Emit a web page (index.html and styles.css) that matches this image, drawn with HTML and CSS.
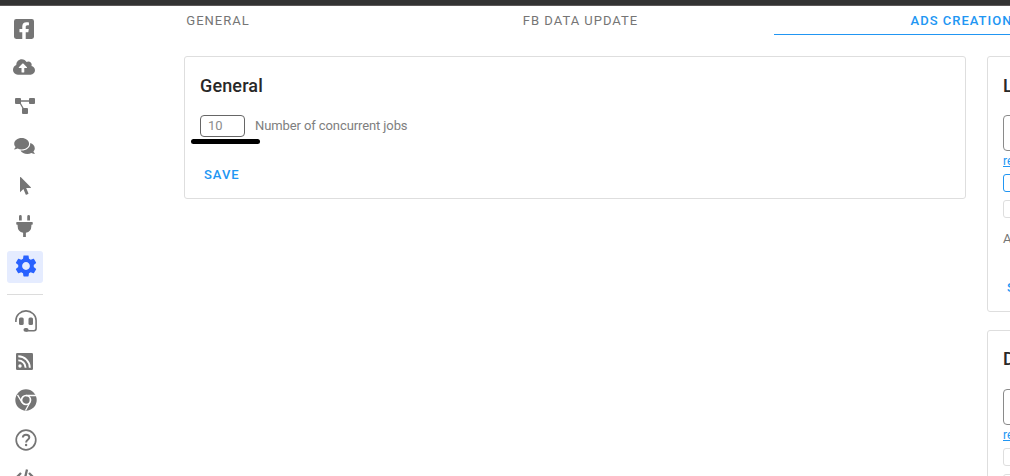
FILE: index.html
```
<!DOCTYPE html>
<html lang="en">
<head>
  <meta charset="utf-8">
  <title>Settings</title>
  <link rel="stylesheet" href="styles.css">
</head>
<body>

  <div class="topbar"></div>

  <div class="app">
    <!-- SIDEBAR -->
    <nav class="sidebar">
      <a class="item"><svg class="i-fb" viewBox="0 32 448 448"><path d="M400 32H48A48 48 0 0 0 0 80v352a48 48 0 0 0 48 48h137.25V327.69h-63V256h63v-54.64c0-62.15 37-96.48 93.67-96.48 27.14 0 55.52 4.84 55.52 4.84v61h-31.27c-30.81 0-40.42 19.12-40.42 38.73V256h68.78l-11 71.69h-57.78V480H400a48 48 0 0 0 48-48V80a48 48 0 0 0-48-48z"/></svg></a>
      <a class="item"><svg class="i-cloud" viewBox="0 32 640 448"><path d="M537.6 226.6c4.1-10.7 6.4-22.4 6.4-34.6 0-53-43-96-96-96-19.7 0-38.1 6-53.3 16.2C367 64.2 315.3 32 256 32c-88.4 0-160 71.6-160 160 0 2.7.1 5.4.2 8.1C40.2 219.8 0 273.2 0 336c0 79.5 64.5 144 144 144h368c70.7 0 128-57.3 128-128 0-61.9-44-113.6-102.4-125.4zM393.4 288H328v112c0 8.8-7.2 16-16 16h-48c-8.8 0-16-7.2-16-16V288h-65.4c-14.3 0-21.4-17.2-11.3-27.3l105.4-105.4c6.2-6.2 16.4-6.2 22.6 0l105.4 105.4c10.1 10.1 2.9 27.3-11.3 27.3z"/></svg></a>
      <a class="item"><svg class="i-flow" viewBox="0 0 20 16"><rect width="6" height="6" rx="1"/><rect x="14" width="6" height="6" rx="1"/><rect x="7" y="10" width="6" height="6" rx="1"/><path d="M5 3h10M4.500 4L8.500 11" stroke="currentColor" stroke-width="1.300"/></svg></a>
      <a class="item"><svg class="i-chat" viewBox="0 32 576 448"><path d="M416 192c0-88.400-93.100-160-208-160S0 103.600 0 192c0 34.300 14.100 65.900 38 92-13.400 30.200-35.500 54.200-35.800 54.500-2.200 2.300-2.800 5.700-1.500 8.700S4.800 352 8 352c36.600 0 66.900-12.300 88.700-25 32.200 15.700 70.300 25 111.300 25 114.900 0 208-71.600 208-160zm122 220c23.900-26 38-57.700 38-92 0-66.900-53.500-124.200-129.300-148.100.9 6.600 1.300 13.300 1.300 20.100 0 105.900-107.700 192-240 192-10.800 0-21.300-.8-31.700-1.900C207.800 439.600 281.800 480 368 480c41 0 79.100-9.200 111.300-25 21.800 12.700 52.100 25 88.700 25 3.200 0 6.100-1.900 7.300-4.800 1.300-2.900.7-6.300-1.500-8.700-.3-.3-22.400-24.200-35.800-54.500z"/></svg></a>
      <a class="item"><svg class="i-cursor" viewBox="0 0 11 18"><path d="M0 .4v14.800l3.400-3.100 2.300 5.300q.2.500.7.300l1.700-.7q.5-.2.300-.7L6.200 11h4.500q.5-.3.100-.8L.7.100Q.2-.2 0 .4z"/></svg></a>
      <a class="item"><svg class="i-plug" viewBox="0 0 384 512"><path d="M320,32a32,32,0,0,0-64,0v96h64Zm48,128H16A16,16,0,0,0,0,176v32a16,16,0,0,0,16,16H32v32A160.070,160.070,0,0,0,160,412.800V512h64V412.800A160.070,160.070,0,0,0,352,256V224h16a16,16,0,0,0,16-16V176A16,16,0,0,0,368,160ZM128,32a32,32,0,0,0-64,0v96h64Z"/></svg></a>
      <a class="item active"><svg class="i-gear" viewBox="0 0 24 24"><path d="M19.140 12.940c.04-.3.060-.61.060-.94 0-.32-.02-.64-.07-.94l2.030-1.580c.18-.14.230-.41.120-.61l-1.920-3.320c-.12-.22-.37-.29-.59-.22l-2.390.96c-.5-.38-1.030-.7-1.620-.94l-.36-2.540c-.04-.24-.24-.41-.48-.41h-3.840c-.24 0-.43.17-.47.41l-.36 2.540c-.59.24-1.130.57-1.620.94l-2.390-.96c-.22-.08-.47 0-.59.22L2.740 8.870c-.12.21-.08.47.12.61l2.030 1.580c-.05.3-.09.63-.09.94s.02.640.07.940l-2.030 1.580c-.18.140-.23.410-.12.610l1.920 3.320c.12.220.37.290.59.220l2.390-.96c.5.380 1.030.700 1.620.940l.36 2.540c.05.240.24.410.48.410h3.840c.24 0 .44-.17.47-.41l.36-2.540c.59-.24 1.130-.56 1.620-.94l2.390.96c.22.080.47 0 .59-.22l1.920-3.320c.12-.22.070-.47-.12-.61l-2.010-1.580zM12 15.600c-1.980 0-3.600-1.620-3.600-3.600s1.620-3.600 3.600-3.600 3.600 1.620 3.600 3.600-1.620 3.600-3.600 3.600z"/></svg></a>

      <div class="divider"></div>

      <a class="item"><svg class="i-head" viewBox="0 0 22 22"><path d="M.9 12v-1.500a10.100 9.600 0 0 1 20.200 0V18.500a2.200 2.200 0 0 1-2.200 2.200H11" fill="none" stroke="currentColor" stroke-width="1.600"/><rect x="4" y="7.500" width="4.700" height="7.500" rx="1.500"/><rect x="13.500" y="7.500" width="4.500" height="7.500" rx="1.500"/><rect x="8.500" y="18" width="5" height="3.800" rx="1.800"/></svg></a>
      <a class="item"><svg class="i-rss" viewBox="0 0 17 17"><rect width="17" height="17" rx="1.300"/><g fill="none" stroke="#fff" stroke-width="1.900"><path d="M2.300 7.400a7.300 7.300 0 0 1 7.300 7.300M2.300 3.200a11.500 11.500 0 0 1 11.500 11.500"/></g><circle cx="4" cy="13" r="1.700" fill="#fff"/></svg></a>
      <a class="item"><svg class="i-chrome" viewBox="0 0 22 22"><circle cx="11" cy="11" r="10.700"/><circle cx="11" cy="11" r="4.500" fill="none" stroke="#fff" stroke-width="1.700"/><path d="M11 6.500h10M7 13.300L2.500 5.800M15 13.300L10.500 21.500" stroke="#fff" stroke-width="1.300"/></svg></a>
      <a class="item"><svg class="i-help" viewBox="0 0 22 22"><g fill="none" stroke="currentColor"><circle cx="11" cy="11" r="9.800" stroke-width="1.700"/><path d="M7.800 8.500C8 6.600 9.200 5.700 11 5.700c2 0 3.300 1 3.300 2.700 0 2.400-3.200 2.300-3.200 5" stroke-width="2"/></g><circle cx="11.100" cy="16" r="1.200"/></svg></a>
      <a class="item"><svg class="i-code" viewBox="0 0 22 18"><path d="M7 4L2 9l5 5M15 4l5 5-5 5M13 .5l-4 17" fill="none" stroke="currentColor" stroke-width="2.300"/></svg></a>
    </nav>

    <main class="content">
      <!-- TABS -->
      <div class="tabs">
        <div class="tab tab-general">General</div>
        <div class="tab tab-fb">FB data update</div>
        <div class="tab tab-ads selected">Ads creation</div>
      </div>

      <!-- CARDS -->
      <div class="columns">
        <section class="card card-general">
          <h2>General</h2>
          <div class="field">
            <div class="number">10</div>
            <label>Number of concurrent jobs</label>
            <span class="marker"></span>
          </div>
          <div class="save">Save</div>
        </section>

        <div class="side">
          <section class="card card-l">
            <h2>L</h2>
            <div class="select"></div>
            <a class="reset">reset</a>
            <div class="box focus"></div>
            <div class="box"></div>
            <div class="note">A</div>
            <div class="save">Save</div>
          </section>
          <section class="card card-d">
            <h2>D</h2>
            <div class="select"></div>
            <a class="reset">reset</a>
            <div class="box"></div>
            <div class="box"></div>
          </section>
        </div>
      </div>
    </main>
  </div>

</body>
</html>
```
FILE: styles.css
```
* { box-sizing: border-box; }
body {
  margin: 0;
  height: 476px;
  overflow: hidden;
  background: #fff;
  color: #757575;
  font-family: Roboto, sans-serif;
  font-size: 13px;
}
.topbar {
  height: 6px;
  background: #333;
  border-bottom: 1px solid #5c5858;
}
.app {
  display: flex;
  height: 470px;
  overflow: hidden;
}

/* sidebar */
.sidebar {
  flex: none;
  width: 49px;
  padding: 5px 6px 0 7px;
}
.item {
  display: flex;
  align-items: center;
  justify-content: center;
  height: 32px;
  margin-bottom: 8px;
  border-radius: 3px;
  color: #757575;
}
.item svg {
  display: block;
  flex: none;
  fill: currentColor;
}
.item.active {
  background: #e5ecff;
  color: #2962ff;
  margin-bottom: 11px;
}
.divider {
  height: 1px;
  margin-bottom: 10px;
  background: #dcdcdc;
}
.i-fb { width: 20px; height: 20px; margin: 3px 2px 0 0; }
.i-cloud { width: 22px; height: 16px; margin: 0 3px 0 0; }
.i-flow { width: 20px; height: 16px; margin: -2px 1px 0 0; }
.i-chat { width: 21px; height: 16px; margin: -2px 1px 0 0; }
.i-cursor { width: 11px; height: 18px; margin-top: -2px; }
.i-plug { width: 17px; height: 22px; margin: -2px 1px 0 0; }
.i-gear { width: 26px; height: 26px; margin: -2px 0 0 1px; }
.i-head { width: 22px; height: 22px; margin-left: 1px; }
.i-rss { width: 17px; height: 17px; margin-right: 2px; }
.i-chrome { width: 22px; height: 22px; margin: -2px 0 0 1px; }
.i-help { width: 22px; height: 22px; margin: -2px 0 0 1px; }
.i-code { width: 22px; height: 18px; margin-top: -6px; }

/* tabs */
.content {
  flex: 1;
  min-width: 0;
}
.tabs {
  display: flex;
  height: 29px;
}
.tab {
  flex: none;
  height: 29px;
  padding-left: 1px;
  line-height: 29px;
  text-align: center;
  text-transform: uppercase;
  font-weight: 400;
  letter-spacing: 1px;
  white-space: nowrap;
}
.tab-general { width: 337px; }
.tab-fb { width: 388px; }
.tab-ads { width: 376px; }
.tab.selected {
  padding-left: 0;
  padding-right: 1px;
  font-weight: 500;
  color: #2196f3;
  border-bottom: 1px solid #2196f3;
}

/* cards */
.columns {
  display: flex;
  align-items: flex-start;
  gap: 21px;
  padding: 21px 0 0 135px;
}
.card {
  border: 1px solid #dedede;
  border-radius: 3px;
  padding: 15px;
}
.card-general {
  flex: none;
  width: 782px;
  height: 143px;
}
.side {
  flex: none;
  width: 782px;
}
.card-l {
  height: 256px;
  margin-bottom: 18px;
}
.card-d { height: 256px; }
h2 {
  margin: 0 0 15px;
  height: 28px;
  line-height: 28px;
  font-size: 18px;
  font-weight: 500;
  letter-spacing: 0.15px;
  color: #282828;
}
.card-d h2 { line-height: 26px; }
.field {
  position: relative;
  display: flex;
  align-items: center;
  gap: 10px;
  height: 22px;
}
.field label {
  line-height: 20px;
  letter-spacing: -0.1px;
  color: #7e7e7e;
}
.number {
  width: 45px;
  height: 22px;
  padding-left: 7px;
  line-height: 20px;
  border: 1px solid #666;
  border-radius: 4px;
  color: #8c8c8c;
}
/* hand drawn underline below the number */
.marker {
  position: absolute;
  left: -9px;
  top: 24px;
  width: 69px;
  height: 5px;
  border-radius: 3px;
  background: #000;
}
.save {
  margin: 28px 0 0 4px;
  line-height: 20px;
  text-transform: uppercase;
  font-weight: 500;
  letter-spacing: 1px;
  color: #2196f3;
}
.select {
  height: 36px;
  border: 1px solid #8a8a8a;
  border-radius: 4px;
}
.reset {
  display: block;
  height: 19px;
  line-height: 20px;
  margin-bottom: 4px;
  font-size: 12px;
  color: #2196f3;
  text-decoration: underline;
}
.box {
  height: 18px;
  margin-bottom: 8px;
  border: 1px solid #dedede;
  border-radius: 3px;
}
.box.focus { border-color: #2196f3; }
.note {
  margin-top: 11px;
  line-height: 20px;
}
.card-l .save { margin-top: 29px; }
```
